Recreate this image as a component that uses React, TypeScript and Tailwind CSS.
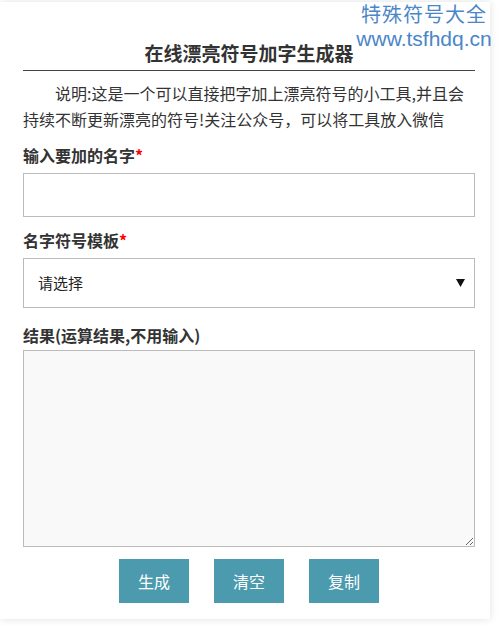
import React from "react";

const cjk = '"Noto Sans CJK SC", "Noto Sans", sans-serif';

export default function App() {
  return (
    <div className="relative w-[499px] h-[632px] bg-white overflow-hidden" style={{ fontFamily: cjk }}>
      <div className="w-[490px] mt-[2px] bg-white shadow-[0_0_8px_rgba(0,0,0,0.12)] pl-[23px] pr-[15px] pt-[38px] pb-[16px] text-[#333]">
        <h1 className="text-[19px] leading-[26px] font-bold text-center pb-[4px] border-b border-[#444] text-[#333]">
          在线漂亮符号加字生成器
        </h1>
        <p className="mt-[9px] text-[16px] leading-[26px] indent-[2em] text-[#333]">
          说明:这是一个可以直接把字加上漂亮符号的小工具,并且会持续不断更新漂亮的符号!关注公众号，可以将工具放入微信
        </p>
        <div className="mt-[12px] text-[16px] leading-[22px] font-bold text-[#333]">
          输入要加的名字<span className="text-[#ff0000]">*</span>
        </div>
        <input className="mt-[7px] block w-full h-[44px] border border-[#bbb] bg-white outline-none px-[14px]" />
        <div className="mt-[12px] text-[16px] leading-[22px] font-bold text-[#333]">
          名字符号模板<span className="text-[#ff0000]">*</span>
        </div>
        <div className="mt-[7px] flex items-center justify-between h-[50px] border border-[#bbb] bg-white pl-[14px] pr-[8px]">
          <span className="text-[15px] text-[#222]">请选择</span>
          <svg width="9" height="8" viewBox="0 0 9 8" className="mr-[1px]">
            <polygon points="0,0 9,0 4.5,8" fill="#111" />
          </svg>
        </div>
        <div className="mt-[16px] text-[16px] leading-[22px] font-bold text-[#333]">
          结果(运算结果,不用输入)
        </div>
        <textarea className="mt-[4px] block w-full h-[197px] border border-[#bbb] bg-[#f9f9f9] outline-none" readOnly />
        <div className="mt-[12px] flex justify-center gap-[25px]">
          <button className="w-[70px] h-[44px] bg-[#4b9aad] text-white text-[16px]">生成</button>
          <button className="w-[70px] h-[44px] bg-[#4b9aad] text-white text-[16px]">清空</button>
          <button className="w-[70px] h-[44px] bg-[#4b9aad] text-white text-[16px]">复制</button>
        </div>
      </div>
      <div className="absolute left-[349px] top-[2px] w-[150px] text-center text-[#4a86c8]">
        <div className="text-[20px] leading-[24px] tracking-[1px]">特殊符号大全</div>
        <div className="text-[21px] leading-[24px] mt-[1px]" style={{ fontFamily: '"Liberation Sans", Arial, sans-serif' }}>
          www.tsfhdq.cn
        </div>
      </div>
    </div>
  );
}
